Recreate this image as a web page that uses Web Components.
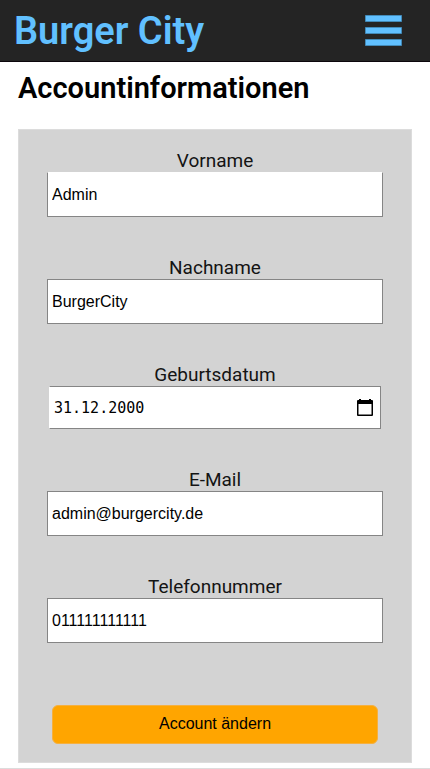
<!DOCTYPE html>
<html lang="de">
<head>
<meta charset="utf-8">
<meta name="viewport" content="width=device-width, initial-scale=1">
<title>Burger City</title>
<style>
body { margin: 0; background: #fff; color: #000; font-family: Roboto, sans-serif; }
</style>
</head>
<body>
<account-page></account-page>

<script>
class SiteHeader extends HTMLElement {
  constructor() {
    super();
    this.attachShadow({ mode: 'open' }).innerHTML = `
      <style>
        :host { display: block; background: #242424; border-bottom: 1px solid #0c060c; }
        header { display: flex; align-items: center; justify-content: space-between; height: 61px; padding: 0 28px 0 14px; }
        a { color: #61c0ff; font-size: 38px; line-height: 44px; font-weight: 600; text-decoration: none; }
        button { display: block; padding: 0; border: 0; background: none; color: #61c0ff; cursor: pointer; }
        svg { display: block; }
      </style>
      <header>
        <a href="#"><slot></slot></a>
        <button type="button" aria-label="Menü">
          <svg width="37" height="31" viewBox="0 0 37 31" fill="#61c0ff" stroke="#438ab8" stroke-width="1">
            <path d="M.5 .5h36v6h-36zM.5 12.5h36v6h-36zM.5 24.5h36v6h-36z"/>
          </svg>
        </button>
      </header>`;
  }
}
customElements.define('site-header', SiteHeader);

class FormField extends HTMLElement {
  constructor() {
    super();
    this.attachShadow({ mode: 'open' });
  }
  connectedCallback() {
    const type = this.getAttribute('type') || 'text';
    this.shadowRoot.innerHTML = `
      <style>
        :host { display: flex; flex-direction: column; align-items: center; gap: 2px; }
        label { font-size: 19px; line-height: 19px; color: #141414; }
        input { box-sizing: border-box; width: 100%; height: 45px; margin: 0; padding: 1px 4px; border: 1px solid #858585; border-radius: 0; background: #fff; color: #000; font: 16px "Liberation Sans", sans-serif; outline: 0; }
        :host([open-top]) input { border-top-color: #fff; }
      </style>
      <label for="field">${this.getAttribute('label')}</label>
      <input id="field" type="${type}" value="${this.getAttribute('value')}">`;
  }
}
customElements.define('form-field', FormField);

class DateField extends HTMLElement {
  constructor() {
    super();
    this.attachShadow({ mode: 'open' });
  }
  connectedCallback() {
    this.shadowRoot.innerHTML = `
      <style>
        :host { display: flex; flex-direction: column; align-items: center; gap: 2px; }
        label { font-size: 19px; line-height: 19px; color: #141414; }
        .box { box-sizing: border-box; display: flex; align-items: center; align-self: stretch; height: 43px; margin: 0 2px; padding: 0 6px 0 4px; border: 1px solid #858585; border-left-color: #fff; background: #fff; }
        input { flex: 1; min-width: 0; padding: 0; border: 0; background: none; color: #000; font: 15px "DejaVu Sans Mono", monospace; outline: 0; }
        button { padding: 0; border: 0; background: none; cursor: pointer; }
        svg { display: block; }
      </style>
      <label for="date">${this.getAttribute('label')}</label>
      <div class="box">
        <input id="date" type="text" inputmode="numeric" value="${this.getAttribute('value')}">
        <button type="button" aria-label="Kalender öffnen">
          <svg width="18" height="20" viewBox="0 0 18 20">
            <path fill="#000" fill-rule="evenodd" d="M3 1h2v1h8V1h2v1h1q1 0 1 1v14q0 1-1 1H2q-1 0-1-1V3q0-1 1-1h1zM2.5 6v10.5h13V6z"/>
          </svg>
        </button>
      </div>`;
  }
}
customElements.define('date-field', DateField);

class SubmitButton extends HTMLElement {
  constructor() {
    super();
    this.attachShadow({ mode: 'open' }).innerHTML = `
      <style>
        :host { display: block; }
        button { display: block; width: 100%; height: 39px; padding: 0 0 2px; border: 1px solid #f5b040; border-radius: 6px; background: #ffa500; color: #000; font: 16px "Liberation Sans", sans-serif; cursor: pointer; }
      </style>
      <button type="button"><slot></slot></button>`;
  }
}
customElements.define('submit-button', SubmitButton);

class AccountPage extends HTMLElement {
  constructor() {
    super();
    this.attachShadow({ mode: 'open' }).innerHTML = `
      <style>
        :host { display: block; border-bottom: 1px solid #dcdcdc; }
        main { padding: 8px 18px 5px; }
        h1 { margin: 0 0 23px; font-size: 29px; line-height: 36px; font-weight: 600; }
        form { display: flex; flex-direction: column; gap: 41px; padding: 21px 28px 18px; border: 1px solid #dcdcdc; background: #d3d3d3; }
        submit-button { margin: 21px 5px 0; }
      </style>
      <site-header>Burger City</site-header>
      <main>
        <h1>Accountinformationen</h1>
        <form>
          <form-field open-top label="Vorname" value="Admin"></form-field>
          <form-field label="Nachname" value="BurgerCity"></form-field>
          <date-field label="Geburtsdatum" value="31.12.2000"></date-field>
          <form-field label="E-Mail" type="email" value="admin@burgercity.de"></form-field>
          <form-field label="Telefonnummer" type="tel" value="011111111111"></form-field>
          <submit-button>Account ändern</submit-button>
        </form>
      </main>`;
  }
}
customElements.define('account-page', AccountPage);
</script>
</body>
</html>
